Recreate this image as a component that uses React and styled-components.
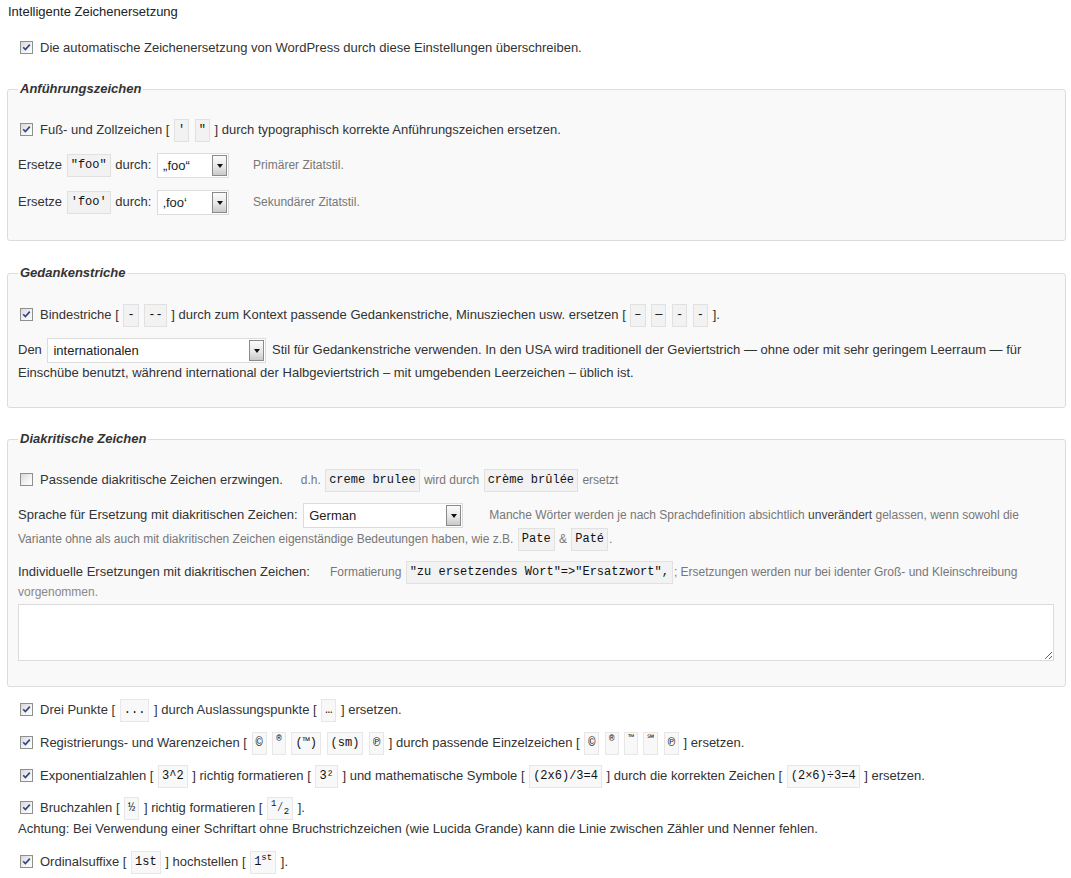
import React from "react";
import styled, { createGlobalStyle } from "styled-components";

const GlobalStyle = createGlobalStyle`
  body {
    margin: 0;
    background: #fff;
    font-family: "Liberation Sans", Arial, sans-serif;
    font-size: 13px;
    color: #333;
  }
`;

const Page = styled.div`
  padding: 3px 5px 20px 7px;
`;

const Title = styled.h3`
  margin: 0;
  padding-left: 1px;
  font-size: 13px;
  font-weight: normal;
  line-height: 18px;
  color: #222;
`;

const Row = styled.div`
  margin-top: ${(p) => p.$mt ?? 0}px;
  padding-left: ${(p) => (p.$outer ? 11 : 0)}px;
  line-height: ${(p) => p.$lh ?? 24}px;
  white-space: nowrap;
`;

const Fieldset = styled.fieldset`
  margin: ${(p) => p.$mt ?? 22}px 0 0 0;
  padding: ${(p) => p.$pt ?? 21}px 11px ${(p) => p.$pb ?? 24}px 10px;
  border: 1px solid #dcdcdc;
  border-radius: 3px;
  background: #f9f9f9;
  min-width: 0;
`;

const Legend = styled.legend`
  padding: 0 2px;
  font-size: 13px;
  line-height: 18px;
  font-weight: bold;
  font-style: italic;
  color: #333;
`;

const Box = styled.span`
  display: inline-block;
  box-sizing: border-box;
  width: 13px;
  height: 13px;
  margin: -3px 7px 0 2px;
  vertical-align: middle;
  border: 1px solid #8e8f8f;
  background: linear-gradient(135deg, #d8d8d8 0%, #f4f4f4 60%, #fdfdfd 100%);

  svg {
    display: block;
  }
`;

const Checkbox = ({ checked }) => (
  <Box>
    {checked && (
      <svg width="11" height="11" viewBox="0 0 11 11">
        <path d="M2.2 5.2 L4.4 7.6 L8.8 2.6" fill="none" stroke="#34488a" strokeWidth="1.7" />
      </svg>
    )}
  </Box>
);

const Chip = styled.code`
  display: inline-block;
  margin: -2px 1px;
  padding: 0 3px;
  line-height: 21px;
  vertical-align: middle;
  font-family: "Liberation Mono", "DejaVu Sans Mono", monospace;
  font-size: 12px;
  color: #111;
  background: rgba(0, 0, 0, 0.028);
  border: 1px solid rgba(0, 0, 0, 0.065);

  sup,
  sub {
    font-size: 9px;
    line-height: 0;
  }
`;

const Desc = styled.span`
  margin-left: ${(p) => p.$ml ?? 0}px;
  font-size: 12px;
  color: #777;

  strong {
    font-weight: normal;
    color: #444;
  }
`;

const Note = styled.span`
  font-size: 12px;
  color: #888;
`;

const SelectWrap = styled.span`
  display: inline-flex;
  align-items: stretch;
  box-sizing: border-box;
  width: ${(p) => p.$w}px;
  height: 25px;
  margin: -3px 2px;
  vertical-align: middle;
  background: #fff;
  border: 1px solid #dcdcdc;
`;

const SelectText = styled.span`
  flex: 1;
  padding-left: 5px;
  line-height: 23px;
  font-size: 13px;
  color: #222;
`;

const Arrow = styled.span`
  display: flex;
  align-items: center;
  justify-content: center;
  box-sizing: border-box;
  width: 15px;
  margin: 1px;
  border: 1px solid #8a8a8a;
  background: linear-gradient(#fbfbfb 0%, #e8e8e8 55%, #c9c9c9 100%);

  &::after {
    content: "";
    border-left: 3.5px solid transparent;
    border-right: 3.5px solid transparent;
    border-top: 4px solid #111;
  }
`;

const Select = ({ w, value }) => (
  <SelectWrap $w={w}>
    <SelectText>{value}</SelectText>
    <Arrow />
  </SelectWrap>
);

const Paragraph = styled.div`
  margin-top: ${(p) => p.$mt ?? 0}px;
  padding-left: ${(p) => (p.$outer ? 11 : 0)}px;
  line-height: ${(p) => p.$lh ?? 23}px;
`;

const TextArea = styled.textarea`
  display: block;
  box-sizing: border-box;
  width: 100%;
  height: 57px;
  margin-top: 2px;
  border: 1px solid #dcdcdc;
  background: #fff;
  resize: vertical;
`;

export default function App() {
  return (
    <Page>
      <GlobalStyle />
      <Title>Intelligente Zeichenersetzung</Title>

      <Row $outer $mt={15}>
        <Checkbox checked />
        Die automatische Zeichenersetzung von WordPress durch diese Einstellungen überschreiben.
      </Row>

      <Fieldset $mt={20} $pt={20} $pb={26}>
        <Legend>Anführungszeichen</Legend>
        <Row>
          <Checkbox checked />
          Fuß- und Zollzeichen [ <Chip>'</Chip> <Chip>"</Chip> ] durch typographisch korrekte Anführungszeichen ersetzen.
        </Row>
        <Row $mt={11}>
          Ersetze <Chip>"foo"</Chip> durch: <Select w={72} value="„foo“" />
          <Desc $ml={22}>Primärer Zitatstil.</Desc>
        </Row>
        <Row $mt={13}>
          Ersetze <Chip>'foo'</Chip> durch: <Select w={72} value="‚foo‘" />
          <Desc $ml={22}>Sekundärer Zitatstil.</Desc>
        </Row>
      </Fieldset>

      <Fieldset $mt={23} $pb={23}>
        <Legend>Gedankenstriche</Legend>
        <Row>
          <Checkbox checked />
          Bindestriche [ <Chip>-</Chip> <Chip>--</Chip> ] durch zum Kontext passende Gedankenstriche, Minusziechen usw. ersetzen [ <Chip>–</Chip> <Chip>—</Chip> <Chip>-</Chip> <Chip>-</Chip> ].
        </Row>
        <Paragraph $mt={11}>
          Den <Select w={219} value="internationalen" /> Stil für Gedankenstriche verwenden. In den USA wird traditionell der Geviertstrich — ohne oder mit sehr geringem Leerraum — für
          <br />
          Einschübe benutzt, während international der Halbgeviertstrich – mit umgebenden Leerzeichen – üblich ist.
        </Paragraph>
      </Fieldset>

      <Fieldset $pt={20} $pb={25}>
        <Legend>Diakritische Zeichen</Legend>
        <Row>
          <Checkbox />
          Passende diakritische Zeichen erzwingen.
          <Desc $ml={18}>
            d.h. <Chip>creme brulee</Chip> wird durch <Chip>crème brûlée</Chip> ersetzt
          </Desc>
        </Row>
        <Paragraph $mt={11}>
          Sprache für Ersetzung mit diakritischen Zeichen: <Select w={160} value="German" />
          <Desc $ml={24}>
            Manche Wörter werden je nach Sprachdefinition absichtlich <strong>unverändert</strong> gelassen, wenn sowohl die
          </Desc>
          <br />
          <Desc>
            Variante ohne als auch mit diakritischen Zeichen eigenständige Bedeutungen haben, wie z.B. <Chip>Pate</Chip> &amp; <Chip>Paté</Chip>.
          </Desc>
        </Paragraph>
        <Paragraph $mt={11} $lh={20}>
          Individuelle Ersetzungen mit diakritischen Zeichen:
          <Desc $ml={20}>
            Formatierung <Chip>"zu ersetzendes Wort"=&gt;"Ersatzwort",</Chip>; Ersetzungen werden nur bei identer Groß- und Kleinschreibung
          </Desc>
          <br />
          <Note>vorgenommen.</Note>
        </Paragraph>
        <TextArea />
      </Fieldset>

      <Row $outer $mt={11}>
        <Checkbox checked />
        Drei Punkte [ <Chip>...</Chip> ] durch Auslassungspunkte [ <Chip>…</Chip> ] ersetzen.
      </Row>
      <Row $outer $mt={9}>
        <Checkbox checked />
        Registrierungs- und Warenzeichen [ <Chip>©</Chip> <Chip><sup>®</sup></Chip> <Chip>(™)</Chip> <Chip>(sm)</Chip> <Chip>℗</Chip> ] durch passende Einzelzeichen [ <Chip>©</Chip> <Chip><sup>®</sup></Chip> <Chip><sup>™</sup></Chip> <Chip><sup>℠</sup></Chip> <Chip>℗</Chip> ] ersetzen.
      </Row>
      <Row $outer $mt={9}>
        <Checkbox checked />
        Exponentialzahlen [ <Chip>3^2</Chip> ] richtig formatieren [ <Chip>3²</Chip> ] und mathematische Symbole [ <Chip>(2x6)/3=4</Chip> ] durch die korrekten Zeichen [ <Chip>(2×6)÷3=4</Chip> ] ersetzen.
      </Row>
      <Paragraph $outer $mt={9} $lh={21}>
        <Checkbox checked />
        Bruchzahlen [ <Chip>½</Chip> ] richtig formatieren [ <Chip><sup>1</sup>⁄<sub>2</sub></Chip> ].
        <br />
        Achtung: Bei Verwendung einer Schriftart ohne Bruchstrichzeichen (wie Lucida Grande) kann die Linie zwischen Zähler und Nenner fehlen.
      </Paragraph>
      <Row $outer $mt={11}>
        <Checkbox checked />
        Ordinalsuffixe [ <Chip>1st</Chip> ] hochstellen [ <Chip>1<sup>st</sup></Chip> ].
      </Row>
    </Page>
  );
}
